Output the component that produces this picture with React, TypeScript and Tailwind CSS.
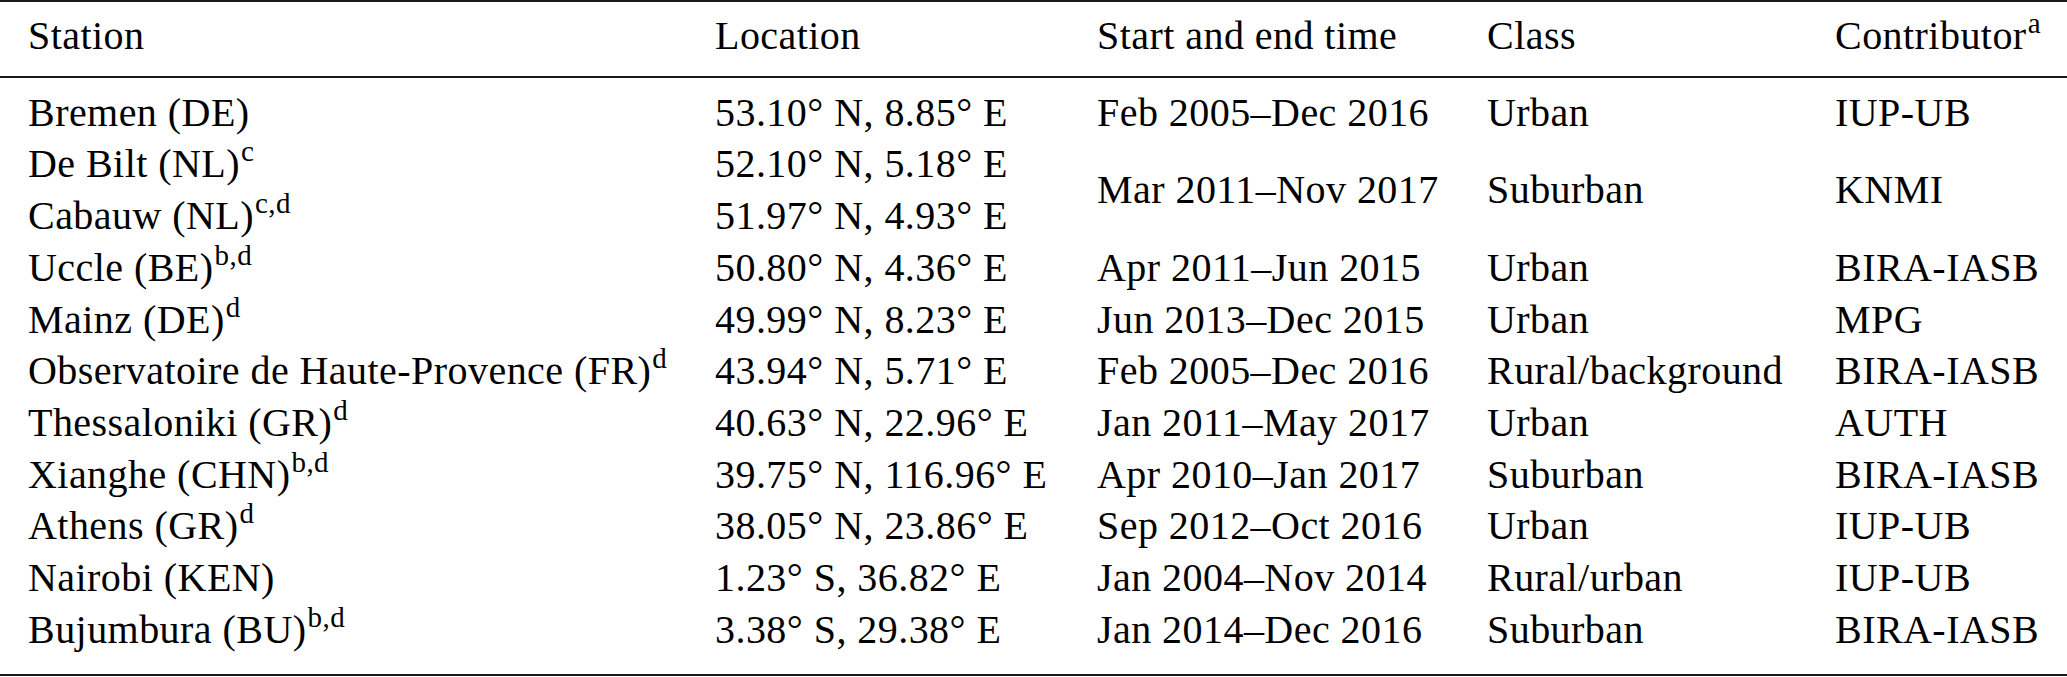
import React from "react";

type Row = {
  station: string;
  note?: string;
  location: string;
  time?: string;
  cls?: string;
  contributor?: string;
  span?: boolean;
};

const rows: Row[] = [
  { station: "Bremen (DE)", location: "53.10° N, 8.85° E", time: "Feb 2005–Dec 2016", cls: "Urban", contributor: "IUP-UB" },
  { station: "De Bilt (NL)", note: "c", location: "52.10° N, 5.18° E", time: "Mar 2011–Nov 2017", cls: "Suburban", contributor: "KNMI", span: true },
  { station: "Cabauw (NL)", note: "c,d", location: "51.97° N, 4.93° E" },
  { station: "Uccle (BE)", note: "b,d", location: "50.80° N, 4.36° E", time: "Apr 2011–Jun 2015", cls: "Urban", contributor: "BIRA-IASB" },
  { station: "Mainz (DE)", note: "d", location: "49.99° N, 8.23° E", time: "Jun 2013–Dec 2015", cls: "Urban", contributor: "MPG" },
  { station: "Observatoire de Haute-Provence (FR)", note: "d", location: "43.94° N, 5.71° E", time: "Feb 2005–Dec 2016", cls: "Rural/background", contributor: "BIRA-IASB" },
  { station: "Thessaloniki (GR)", note: "d", location: "40.63° N, 22.96° E", time: "Jan 2011–May 2017", cls: "Urban", contributor: "AUTH" },
  { station: "Xianghe (CHN)", note: "b,d", location: "39.75° N, 116.96° E", time: "Apr 2010–Jan 2017", cls: "Suburban", contributor: "BIRA-IASB" },
  { station: "Athens (GR)", note: "d", location: "38.05° N, 23.86° E", time: "Sep 2012–Oct 2016", cls: "Urban", contributor: "IUP-UB" },
  { station: "Nairobi (KEN)", location: "1.23° S, 36.82° E", time: "Jan 2004–Nov 2014", cls: "Rural/urban", contributor: "IUP-UB" },
  { station: "Bujumbura (BU)", note: "b,d", location: "3.38° S, 29.38° E", time: "Jan 2014–Dec 2016", cls: "Suburban", contributor: "BIRA-IASB" },
];

const cols = "grid grid-cols-[687px_382px_390px_348px_1fr] pl-[28px]";

const Sup = ({ children }: { children: React.ReactNode }) => (
  <sup className="text-[29px] -top-4 ml-[1px]">{children}</sup>
);

export default function App() {
  return (
    <div className="w-[2067px] h-[677px] bg-white text-black font-['Liberation_Serif','Times_New_Roman',serif] text-[40px] tracking-[0.45px] leading-[51.7px] whitespace-nowrap">
      <div className="border-t-2 border-b-2 border-[#1a1a1a] pt-[8px] pb-[14px]">
        <div className={cols}>
          <div>Station</div>
          <div>Location</div>
          <div>Start and end time</div>
          <div>Class</div>
          <div>
            Contributor<Sup>a</Sup>
          </div>
        </div>
      </div>

      <div className={`${cols} border-b-2 border-[#1a1a1a] pt-[9px] pb-[19px]`}>
        {rows.map((r) =>
          r.time === undefined ? (
            <React.Fragment key={r.station}>
              <div>
                {r.station}
                {r.note && <Sup>{r.note}</Sup>}
              </div>
              <div>{r.location}</div>
            </React.Fragment>
          ) : (
            <React.Fragment key={r.station}>
              <div>
                {r.station}
                {r.note && <Sup>{r.note}</Sup>}
              </div>
              <div>{r.location}</div>
              <div className={r.span ? "row-span-2 flex items-center" : ""}>{r.time}</div>
              <div className={r.span ? "row-span-2 flex items-center" : ""}>{r.cls}</div>
              <div className={r.span ? "row-span-2 flex items-center" : ""}>{r.contributor}</div>
            </React.Fragment>
          )
        )}
      </div>
    </div>
  );
}
